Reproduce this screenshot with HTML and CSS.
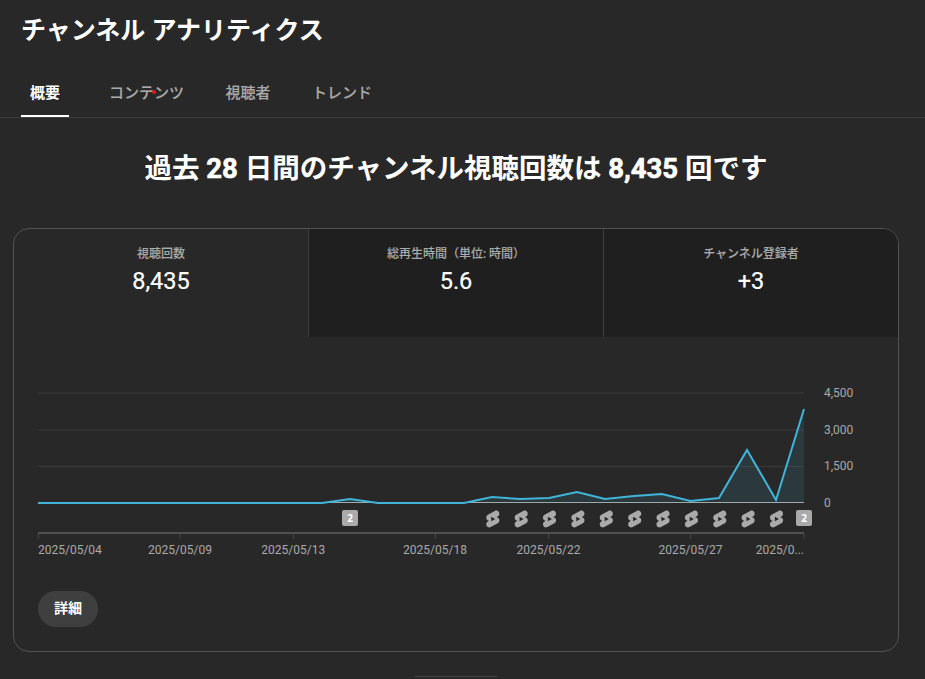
FILE: index.html
```html
<!DOCTYPE html>
<html lang="ja">
  <head>
    <meta charset="utf-8" />
    <meta name="viewport" content="width=device-width, initial-scale=1" />
    <title>チャンネル アナリティクス</title>
    <link rel="stylesheet" href="styles.css">
  </head>
  <body>
    <h1 class="page-title">チャンネル アナリティクス</h1>

    <nav class="tabs">
      <a class="tab active">概要</a>
      <a class="tab">コンテンツ<span class="dot"></span></a>
      <a class="tab">視聴者</a>
      <a class="tab">トレンド</a>
    </nav>

    <main class="content">
      <h2 class="headline">過去 <span class="num">28</span> 日間のチャンネル視聴回数は <span class="num">8,435</span> 回です</h2>

      <section class="card">
        <div class="metrics">
          <div class="metric active">
            <div class="metric-label">視聴回数</div>
            <div class="metric-value">8,435</div>
          </div>
          <div class="metric">
            <div class="metric-label">総再生時間（単位: 時間）</div>
            <div class="metric-value">5.6</div>
          </div>
          <div class="metric">
            <div class="metric-label">チャンネル登録者</div>
            <div class="metric-value">+3</div>
          </div>
        </div>

        <svg class="chart" width="840" height="190" viewBox="0 0 840 190">
          <defs>
            <g id="shorts">
              <path transform="scale(0.82 0.84) translate(-12 -12)" fill-rule="evenodd" d="M17.770 10.320l-1.200-.5L18 9.060c1.840-.96 2.530-3.230 1.560-5.060s-3.240-2.530-5.070-1.560L6 6.940c-1.290.68-2.070 2.040-2 3.490.07 1.420.93 2.670 2.220 3.250.03.01 1.200.5 1.200.5L6 14.930c-1.830.97-2.530 3.240-1.560 5.070.97 1.830 3.240 2.530 5.070 1.560l8.500-4.500c1.290-.68 2.060-2.040 1.990-3.490-.07-1.420-.94-2.680-2.230-3.250zM10 14.650v-5.300L15 12l-5 2.650z" />
            </g>
          </defs>

          <g class="grid">
            <path d="M0 16H766M0 53H766M0 89.500H766" />
          </g>
          <path class="zero" d="M0 125.500H766" />
          <path class="area" d="M0 126H284L312 122L340 126H426L454 120L482 122L511 121L539 115L567 122L596 119L624 117L652.500 124L681 121L709 73L738 123L766 32V126z" />
          <path class="line" d="M0 126H284L312 122L340 126H426L454 120L482 122L511 121L539 115L567 122L596 119L624 117L652.500 124L681 121L709 73L738 123L766 32" />

          <g class="label">
            <text x="786" y="20">4,500</text>
            <text x="786" y="57">3,000</text>
            <text x="786" y="93">1,500</text>
            <text x="786" y="130">0</text>
          </g>

          <g class="markers">
            <rect x="304" y="133" width="16" height="16" rx="2" />
            <text x="312" y="145">2</text>
            <use href="#shorts" x="454.800" y="142" />
            <use href="#shorts" x="483.200" y="142" />
            <use href="#shorts" x="511.500" y="142" />
            <use href="#shorts" x="539.900" y="142" />
            <use href="#shorts" x="568.300" y="142" />
            <use href="#shorts" x="596.700" y="142" />
            <use href="#shorts" x="625" y="142" />
            <use href="#shorts" x="653.400" y="142" />
            <use href="#shorts" x="681.800" y="142" />
            <use href="#shorts" x="710.100" y="142" />
            <use href="#shorts" x="738.500" y="142" />
            <rect x="758" y="133" width="16" height="16" rx="2" />
            <text x="766" y="145">2</text>
          </g>

          <path class="axis" d="M0 156H766" />
          <path class="ticks" d="M0.500 157V162M142 157V162M255.500 157V162M397.500 157V162M510.500 157V162M652.500 157V162M766 157V162" />

          <g class="label">
            <text x="0" y="177">2025/05/04</text>
            <text class="mid" x="142" y="177">2025/05/09</text>
            <text class="mid" x="255.300" y="177">2025/05/13</text>
            <text class="mid" x="397" y="177">2025/05/18</text>
            <text class="mid" x="510.500" y="177">2025/05/22</text>
            <text class="mid" x="652.500" y="177">2025/05/27</text>
            <text class="end" x="766" y="177">2025/0...</text>
          </g>
        </svg>

        <button class="more" type="button">詳細</button>
      </section>

      <div class="next-edge"></div>
    </main>
  </body>
</html>
```

FILE: styles.css
```css
* {
  box-sizing: border-box;
}
body {
  margin: 0;
  height: 679px;
  overflow: hidden;
  background: #282828;
  color: #fff;
  font-family: Roboto, "Noto Sans CJK JP", sans-serif;
}
.page-title {
  margin: 0;
  padding: 13px 0 0 21px;
  font-size: 25px;
  line-height: 36px;
  font-weight: 700;
}
.tabs {
  display: flex;
  gap: 40px;
  height: 69px;
  padding: 19px 0 0 21px;
  border-bottom: 1px solid #3e3e3e;
}
.tab {
  position: relative;
  min-width: 48px;
  height: 49px;
  color: #aaa;
  font-size: 15px;
  line-height: 50px;
  font-weight: 500;
  text-align: center;
  -webkit-text-stroke: 0.15px #aaa;
}
.tab.active {
  color: #fff;
  font-weight: 700;
  border-bottom: 2px solid #fff;
  -webkit-text-stroke: 0;
}
.dot {
  position: absolute;
  left: 43px;
  top: 22px;
  width: 4px;
  height: 4px;
  border-radius: 50%;
  background: #e01b1b;
}
.content {
  width: 886px;
  margin-left: 13px;
}
.headline {
  margin: 0;
  padding: 31px 0 39px;
  font-size: 27.5px;
  line-height: 40px;
  font-weight: 700;
  text-align: center;
  white-space: nowrap;
}
.num {
  -webkit-text-stroke: 0.6px #fff;
}
.card {
  height: 424px;
  border: 1px solid #535353;
  border-radius: 16px;
  overflow: hidden;
}
.metrics {
  display: grid;
  grid-template-columns: 294px 295px 295px;
  height: 108px;
}
.metric {
  padding-top: 15px;
  background: #1f1f1f;
  border-left: 1px solid #3e3e3e;
  text-align: center;
}
.metric.active {
  background: none;
  border-left: none;
}
.metric-label {
  color: #aaa;
  font-size: 12px;
  line-height: 20px;
  font-weight: 500;
  -webkit-text-stroke: 0.1px #aaa;
}
.metric-value {
  font-size: 23.5px;
  line-height: 34px;
  -webkit-text-stroke: 0.2px #fff;
}
.chart {
  display: block;
  margin: 40px 0 0 24px;
}
.grid {
  stroke: #3a3a3a;
}
.zero {
  stroke: #aaa;
}
.area {
  fill: #41b4d9;
  fill-opacity: 0.12;
}
.line {
  fill: none;
  stroke: #41b4d9;
  stroke-width: 2;
}
.axis {
  stroke: #505050;
  stroke-width: 2;
}
.ticks {
  stroke: #464646;
}
.label {
  fill: #aaa;
  font-size: 12px;
}
.mid {
  text-anchor: middle;
}
.end {
  text-anchor: end;
}
.markers {
  fill: #aaa;
}
.markers text {
  fill: #fff;
  font-family: "Open Sans", sans-serif;
  font-size: 10px;
  font-weight: 700;
  text-anchor: middle;
}
.more {
  display: block;
  width: 60px;
  height: 36px;
  margin: 24px 0 0 24px;
  padding: 0 0 4px;
  border: none;
  border-radius: 18px;
  background: #3f3f3f;
  color: #fff;
  font-family: inherit;
  font-size: 14px;
  font-weight: 700;
}
.next-edge {
  width: 82px;
  height: 1px;
  margin: 24px 0 0 402px;
  background: #444;
}
```
